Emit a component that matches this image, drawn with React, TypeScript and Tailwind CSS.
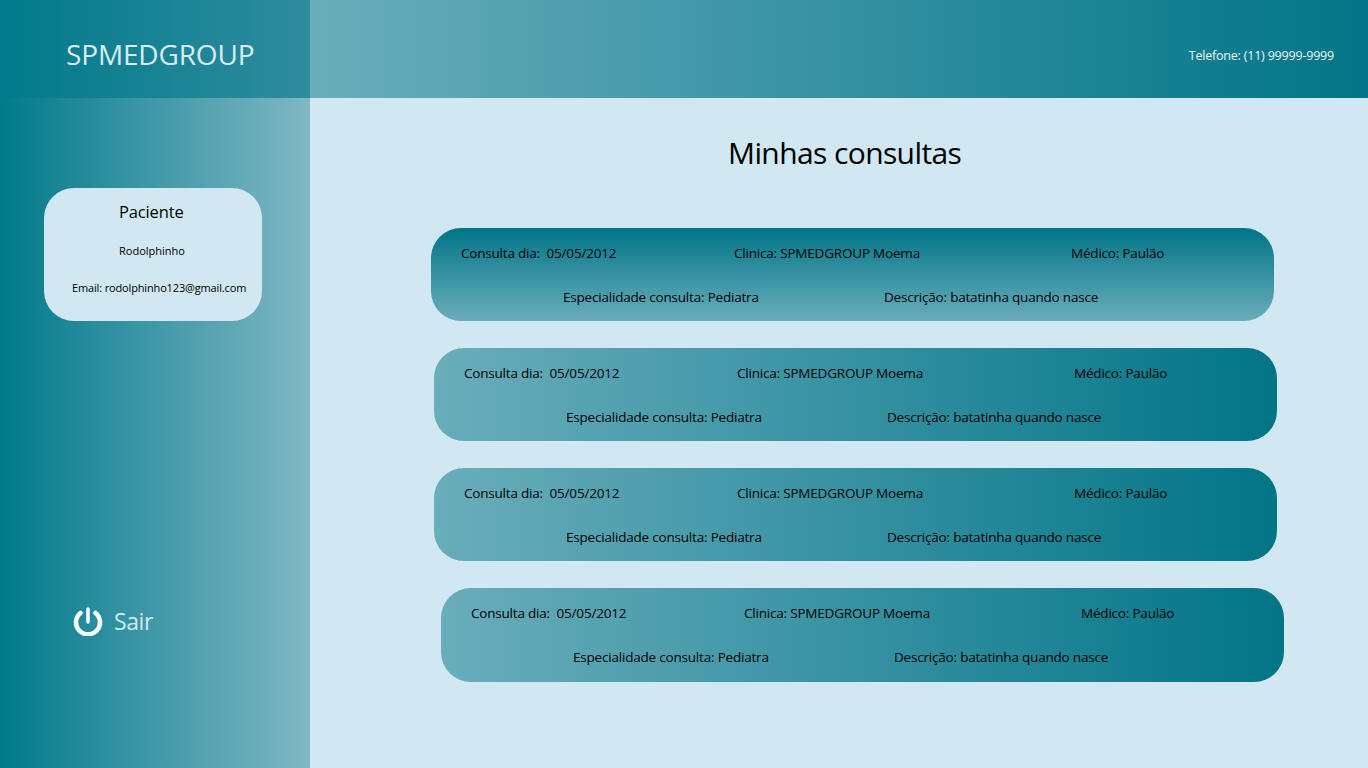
const consultas = [
  { margin: 'ml-[121px] h-[93px]', fundo: 'bg-linear-to-b/srgb from-[#017587] to-[#6aadbb]' },
  { margin: 'ml-[124px] h-[93px]', fundo: 'bg-linear-to-r/srgb from-[#6aadbb] to-[#017587]' },
  { margin: 'ml-[124px] h-[93px]', fundo: 'bg-linear-to-r/srgb from-[#6aadbb] to-[#017587]' },
  { margin: 'ml-[131px] h-[94px]', fundo: 'bg-linear-to-r/srgb from-[#6aadbb] to-[#017587]' },
]

function Consulta({ margin, fundo }: { margin: string; fundo: string }) {
  return (
    <div className={`${margin} ${fundo} w-[843px] rounded-[30px] pt-[15px] text-[13.5px] font-medium leading-[20px] tracking-[-0.2px] text-black`}>
      <div className="flex pl-[30px]">
        <span className="w-[273px]">Consulta dia:&nbsp; 05/05/2012</span>
        <span className="w-[337px]">Clinica: SPMEDGROUP Moema</span>
        <span>Médico: Paulão</span>
      </div>
      <div className="flex pl-[132px] mt-[24px]">
        <span className="w-[321px]">Especialidade consulta: Pediatra</span>
        <span>Descrição: batatinha quando nasce</span>
      </div>
    </div>
  )
}

export default function App() {
  return (
    <div className="w-[1368px] h-[768px] overflow-hidden flex flex-col bg-[#d1e7f2] font-['Open_Sans',sans-serif]">
      <header className="flex h-[98px] shrink-0">
        <div className="w-[310px] flex items-center pl-[66px] pt-[10px] bg-linear-to-r/srgb from-[#017a8b] to-[#2f8c9e]">
          <span className="text-[28px] tracking-[-0.15px] text-[#d9ecf3]">SPMEDGROUP</span>
        </div>
        <div className="flex-1 flex items-center justify-end pr-[34px] pt-[14px] bg-linear-to-r/srgb from-[#6aadbb] to-[#017587]">
          <span className="text-[12.5px] font-medium tracking-[-0.2px] text-[#eef6f9]">Telefone: (11) 99999-9999</span>
        </div>
      </header>
      <div className="flex flex-1">
        <aside className="w-[310px] flex flex-col pl-[44px] pt-[90px] bg-linear-to-r/srgb from-[#017a8b] to-[#80b7c4]">
          <div className="w-[218px] h-[133px] rounded-[30px] bg-[#d1e7f2] text-black flex flex-col">
            <h2 className="mt-[13px] ml-[75px] text-[16.5px] leading-[22px] tracking-[-0.15px]">Paciente</h2>
            <p className="mt-[20px] ml-[75px] text-[11px] font-medium leading-[16px]">Rodolphinho</p>
            <p className="mt-[21px] ml-[28px] text-[11px] font-medium leading-[16px] tracking-[-0.15px] whitespace-nowrap">Email: rodolphinho123@gmail.com</p>
          </div>
          <div className="mt-[281px] ml-[29px] flex items-center gap-[11px]">
            <svg width="30" height="32" viewBox="0 0 30 32" fill="none" stroke="white" strokeLinecap="round">
              <path d="M15 5v13" strokeWidth="3.5" />
              <path d="M7.5 9a12 12 0 1 0 15 0" strokeWidth="4.5" />
            </svg>
            <span className="pt-[3px] text-[23px] leading-[32px] tracking-[-0.4px] text-[#d1e7f2]">Sair</span>
          </div>
        </aside>
        <main className="flex-1">
          <h1 className="mt-[33px] ml-[418px] text-[30px] leading-[44px] tracking-[-0.6px] text-black">Minhas consultas</h1>
          <div className="mt-[53px] flex flex-col gap-[27px]">
            {consultas.map((c, i) => (
              <Consulta key={i} margin={c.margin} fundo={c.fundo} />
            ))}
          </div>
        </main>
      </div>
    </div>
  )
}
